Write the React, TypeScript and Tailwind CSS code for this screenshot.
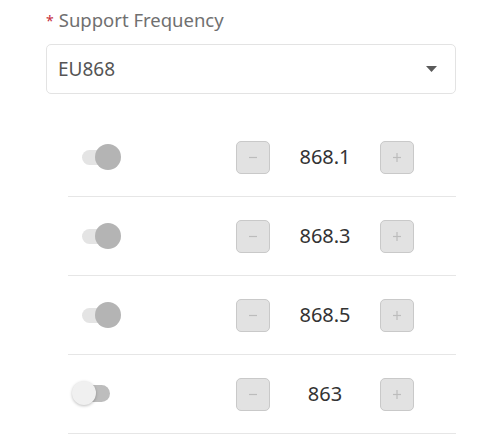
import React from "react";

type Row = { on: boolean; value: string };

const rows: Row[] = [
  { on: true, value: "868.1" },
  { on: true, value: "868.3" },
  { on: true, value: "868.5" },
  { on: false, value: "863" },
];

function Toggle({ on }: { on: boolean }) {
  if (on) {
    return (
      <div className="relative h-[26px] w-[40px]">
        <div className="absolute left-0 top-[6px] h-[15px] w-[32px] rounded-full bg-[#e4e4e4]" />
        <div className="absolute left-[13px] top-0 h-[26px] w-[26px] rounded-full bg-[#b4b4b4]" />
      </div>
    );
  }
  return (
    <div className="relative h-[26px] w-[40px]">
      <div className="absolute left-[8px] top-[4px] h-[17px] w-[30px] rounded-full bg-[#bdbdbd]" />
      <div className="absolute left-0 top-0 h-[24px] w-[24px] rounded-full bg-[#f0f0f0] shadow-[0_1px_3px_rgba(0,0,0,0.25)]" />
    </div>
  );
}

function StepBtn({ kind }: { kind: "minus" | "plus" }) {
  return (
    <div className="flex h-[33px] w-[34px] items-center justify-center rounded-[5px] border border-[#c9c9c9] bg-[#e2e2e2]">
      <svg width="12" height="12" viewBox="0 0 12 12">
        <line x1="2" y1="6.5" x2="10" y2="6.5" stroke="#bcbcbc" strokeWidth="1.2" />
        {kind === "plus" && <line x1="6" y1="2" x2="6" y2="11" stroke="#bcbcbc" strokeWidth="1.2" />}
      </svg>
    </div>
  );
}

export default function App() {
  return (
    <div
      className="h-[445px] w-[486px] bg-white pl-[46px] pt-[8px]"
      style={{ fontFamily: "'Noto Sans', 'Open Sans', sans-serif" }}
    >
      <div className="flex h-[24px] items-center text-[18.5px] text-[#707070]">
        <span className="mr-[5px] text-[14px] text-[#c62d3a]">*</span>
        <span>Support Frequency</span>
      </div>
      <div className="mt-[12px] flex h-[50px] w-[410px] items-center justify-between rounded-[5px] border border-[#e3e3e3] pl-[11px] pr-[18px] text-[19px] text-[#555]">
        <span>EU868</span>
        <svg width="11" height="7" viewBox="0 0 11 7">
          <polygon points="0,0 11,0 5.5,6" fill="#5a5a5a" />
        </svg>
      </div>
      <div className="ml-[22px] mt-[24px] w-[388px]">
        {rows.map((r, i) => (
          <div
            key={i}
            className="flex h-[79px] items-center border-b border-[#e6e6e6]"
          >
            <div className="flex w-[168px] items-center pl-[14px]">
              <div className={r.on ? "" : "-ml-[10px]"}>
                <Toggle on={r.on} />
              </div>
            </div>
            <StepBtn kind="minus" />
            <div className="w-[110px] text-center text-[20px] text-[#333]">
              {r.value}
            </div>
            <StepBtn kind="plus" />
          </div>
        ))}
      </div>
    </div>
  );
}
